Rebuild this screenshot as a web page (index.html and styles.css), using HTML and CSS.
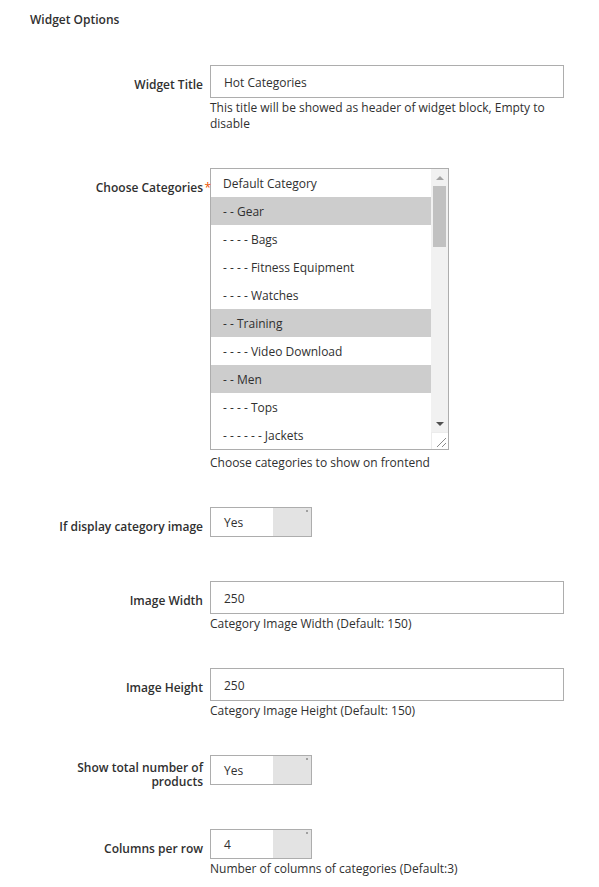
FILE: index.html
```html
<!DOCTYPE html>
<html>
<head>
<meta charset="utf-8">
<link rel="stylesheet" href="styles.css">
</head>
<body>
<div class="page">
  <div class="section-title">Widget Options</div>

  <div class="field">
    <div class="label">Widget Title</div>
    <div class="control">
      <div class="input wide">Hot Categories</div>
      <div class="note">This title will be showed as header of widget block, Empty to disable</div>
    </div>
  </div>

  <div class="field">
    <div class="label"><span class="req">Choose Categories</span></div>
    <div class="control">
      <div class="listbox">
        <div class="options">
          <div class="opt">Default Category</div>
          <div class="opt sel">- - Gear</div>
          <div class="opt">- - - - Bags</div>
          <div class="opt">- - - - Fitness Equipment</div>
          <div class="opt">- - - - Watches</div>
          <div class="opt sel">- - Training</div>
          <div class="opt">- - - - Video Download</div>
          <div class="opt sel">- - Men</div>
          <div class="opt">- - - - Tops</div>
          <div class="opt">- - - - - - Jackets</div>
        </div>
        <div class="scrollbar">
          <div class="arrow up"></div>
          <div class="thumb"></div>
          <div class="track"></div>
          <div class="arrow down"></div>
          <div class="grip">
            <svg width="16" height="16" viewBox="0 0 16 16"><path d="M14 5 L5 14 M14 10 L10 14" stroke="#8a8a8a" stroke-width="1" fill="none"/></svg>
          </div>
        </div>
      </div>
      <div class="note note-list">Choose categories to show on frontend</div>
    </div>
  </div>

  <div class="field nonote">
    <div class="label">If display category image</div>
    <div class="control">
      <div class="select"><span class="sel-val">Yes</span><span class="sel-btn"><i></i></span></div>
    </div>
  </div>

  <div class="field">
    <div class="label">Image Width</div>
    <div class="control">
      <div class="input wide">250</div>
      <div class="note">Category Image Width (Default: 150)</div>
    </div>
  </div>

  <div class="field">
    <div class="label">Image Height</div>
    <div class="control">
      <div class="input wide">250</div>
      <div class="note">Category Image Height (Default: 150)</div>
    </div>
  </div>

  <div class="field nonote">
    <div class="label label-two">Show total number of products</div>
    <div class="control">
      <div class="select"><span class="sel-val">Yes</span><span class="sel-btn"><i></i></span></div>
    </div>
  </div>

  <div class="field">
    <div class="label">Columns per row</div>
    <div class="control">
      <div class="select"><span class="sel-val">4</span><span class="sel-btn"><i></i></span></div>
      <div class="note">Number of columns of categories (Default:3)</div>
    </div>
  </div>
</div>
</body>
</html>
```

FILE: styles.css
```css
html, body {
  margin: 0;
  padding: 0;
  background: #ffffff;
}
body {
  font-family: "Open Sans", "Liberation Sans", sans-serif;
  color: #303030;
  width: 599px;
  height: 887px;
  overflow: hidden;
}
.page {
  padding: 11px 0 0 0;
}
.section-title {
  font-size: 12px;
  font-weight: 600;
  line-height: 18px;
  padding-left: 30px;
  margin-bottom: 36px;
}
.field {
  display: flex;
  align-items: flex-start;
  margin-bottom: 36px;
}
.field.nonote {
  margin-bottom: 44px;
}
.label {
  width: 203px;
  box-sizing: border-box;
  flex: none;
  text-align: right;
  font-size: 12px;
  font-weight: 600;
  line-height: 17px;
  padding-top: 11px;
  margin-right: 7px;
}
.label-two {
  height: 30px;
  padding-top: 6px;
  line-height: 13.5px;
  padding-left: 70px;
}
.req {
  position: relative;
}
.req::after {
  content: "*";
  color: #eb5202;
  position: absolute;
  right: -8px;
  top: 0;
  font-size: 12px;
  font-weight: 400;
}
.control {
  display: flex;
  flex-direction: column;
}
.input {
  box-sizing: border-box;
  height: 33px;
  border: 1px solid #adadad;
  font-size: 12px;
  line-height: 29px;
  padding-top: 2px;
  padding-left: 13px;
  background: #fff;
}
.input.wide {
  width: 354px;
}
.note {
  font-size: 12px;
  line-height: 16px;
  margin-top: 2px;
  width: 354px;
}
.note.note-list {
  margin-top: 5px;
}
.listbox {
  box-sizing: border-box;
  width: 239px;
  height: 282px;
  border: 1px solid #adadad;
  display: flex;
}
.options {
  flex: 1;
  display: flex;
  flex-direction: column;
}
.opt {
  box-sizing: border-box;
  height: 28px;
  line-height: 27px;
  padding-top: 1px;
  font-size: 12px;
  padding-left: 12px;
  white-space: nowrap;
}
.opt.sel {
  background: #cdcdcd;
}
.scrollbar {
  width: 17px;
  flex: none;
  background: #f1f1f1;
  display: flex;
  flex-direction: column;
  align-items: center;
}
.arrow {
  height: 17px;
  width: 17px;
  display: flex;
  align-items: center;
  justify-content: center;
}
.arrow.up::before {
  content: "";
  border-left: 4px solid transparent;
  border-right: 4px solid transparent;
  border-bottom: 4px solid #a3a3a3;
}
.arrow.down::before {
  content: "";
  border-left: 4px solid transparent;
  border-right: 4px solid transparent;
  border-top: 4px solid #505050;
}
.thumb {
  width: 13px;
  height: 61px;
  background: #c1c1c1;
}
.track {
  flex: 1;
}
.grip {
  width: 17px;
  height: 17px;
  background: #ffffff;
  border-top: 1px solid #ececec;
  border-left: 1px solid #ececec;
  box-sizing: border-box;
}
.grip svg {
  display: block;
}
.select {
  box-sizing: border-box;
  width: 102px;
  height: 30px;
  border: 1px solid #adadad;
  display: flex;
  background: #fff;
}
.sel-val {
  flex: 1;
  font-size: 12px;
  line-height: 28px;
  padding-top: 1px;
  padding-left: 13px;
}
.sel-btn {
  width: 38px;
  background: #e3e3e3;
  position: relative;
}
.sel-btn i {
  position: absolute;
  right: 3px;
  top: 2px;
  width: 2px;
  height: 2px;
  background: #a0a0a0;
}
```
